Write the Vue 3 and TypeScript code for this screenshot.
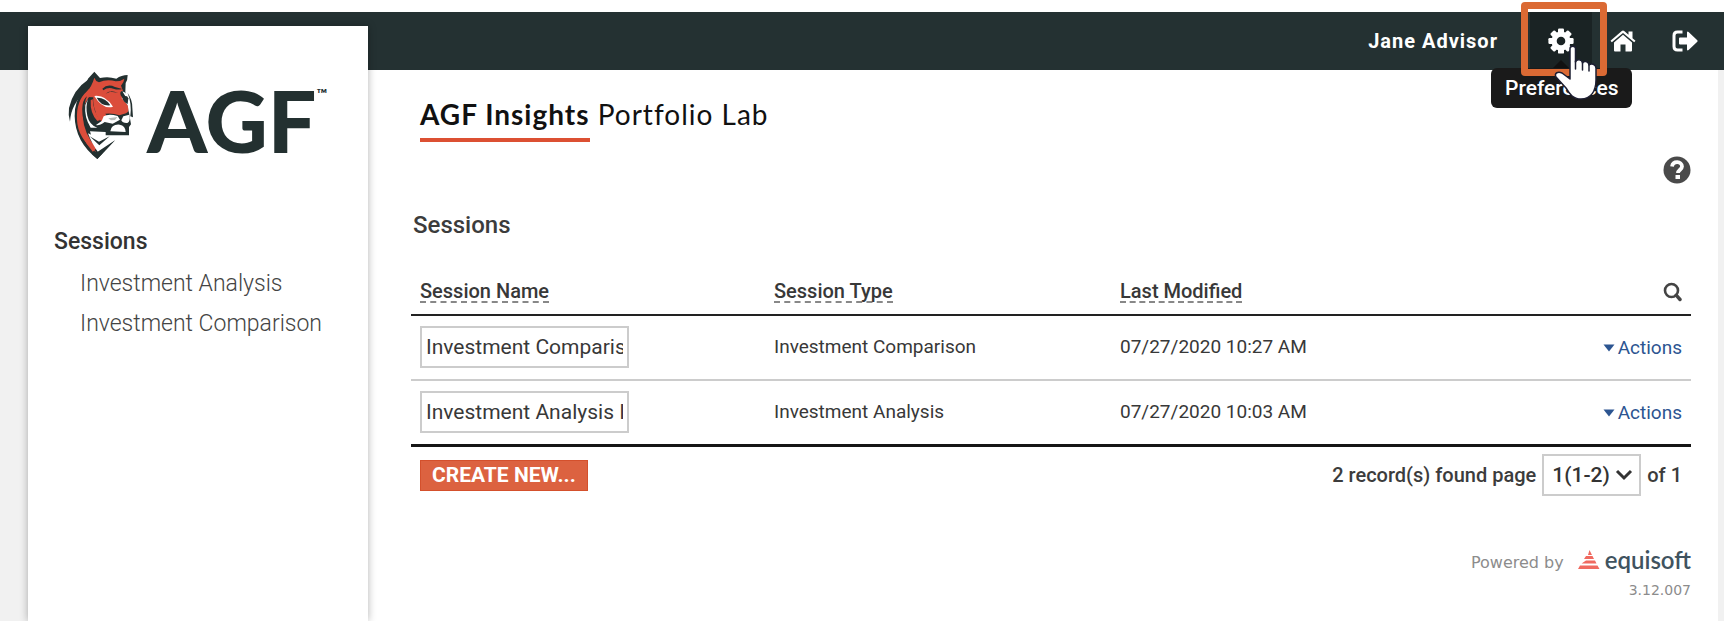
<script setup lang="ts">
import { ref } from 'vue'

interface Session {
  id: number
  name: string
  type: string
  modified: string
}

const user = 'Jane Advisor'
const version = '3.12.007'
const page = ref('1')
const menu = ['Investment Analysis', 'Investment Comparison']
const columns = ['Session Name', 'Session Type', 'Last Modified']
const sessions = ref<Session[]>([
  { id: 1, name: 'Investment Comparison 1', type: 'Investment Comparison', modified: '07/27/2020 10:27 AM' },
  { id: 2, name: 'Investment Analysis I', type: 'Investment Analysis', modified: '07/27/2020 10:03 AM' },
])
</script>

<template>
  <div class="page">
    <header class="topbar">
      <span class="user">{{ user }}</span>
      <nav class="tools" aria-label="Account">
        <a href="#preferences" class="tool active" aria-label="Preferences">
          <svg width="26" height="26" viewBox="0 0 26 26">
            <g fill="#fff">
              <circle cx="13" cy="13" r="9.6" />
              <rect v-for="a in 4" :key="a" x="10" y="0.4" width="6" height="25.2" rx="1.2" :transform="`rotate(${a * 45} 13 13)`" />
            </g>
            <circle cx="13" cy="13" r="4.3" fill="#1a2324" />
          </svg>
          <span class="tooltip" role="tooltip">Preferences</span>
          <span class="highlight"></span>
          <svg class="hand" width="46" height="58" viewBox="0 0 46 58">
            <path d="M16 4.500C16 1.500 21.500 1.500 21.500 4.500V18C22.500 15 28 15 28.500 19C30 16.500 34.500 17 35 21C37 19 42 20 42 24V36C42 47 37 55 27 55C19 55 15.500 50 12 44L2 33C0 29 4 27 8 29L16 35Z" fill="#fff" stroke="#1d1f33" stroke-width="1.500" stroke-linejoin="round" />
            <path d="M21.500 17V25M28.500 19V26M35 21V27" fill="none" stroke="#1d1f33" stroke-width="1.500" stroke-linecap="round" />
          </svg>
        </a>
        <a href="#home" class="tool" aria-label="Home">
          <svg width="26" height="22" viewBox="0 0 26 22" fill="#fff">
            <path d="M13 4.800L22 12.500V20.500Q22 21.500 21 21.500H15.500V14.500H10.500V21.500H5Q4 21.500 4 20.500V12.500Z" />
            <path d="M0.500 10.800L11.800 1Q13 0 14.200 1L18.500 4.700V1.500H22.500V8.200L25.500 10.800L24.200 12.300L13 2.900L1.800 12.300Z" />
          </svg>
        </a>
        <a href="#logout" class="tool" aria-label="Log out">
          <svg width="26" height="22" viewBox="0 0 26 22">
            <path d="M10.500 2H5.500Q2 2 2 5.500V16.500Q2 20 5.500 20H10.500" fill="none" stroke="#fff" stroke-width="3" />
            <path d="M8 7.500H15V2.200Q15.500 1 16.600 1.900L25.300 10.300Q26 11 25.300 11.700L16.600 20.100Q15.500 21 15 19.800V14.500H8Q7 14.500 7 13.500V8.500Q7 7.500 8 7.500Z" fill="#fff" />
          </svg>
        </a>
      </nav>
    </header>

    <aside class="sidebar">
      <div class="brand">
        <svg class="tiger" width="66" height="90" viewBox="24 22 198 270" aria-hidden="true">
          <path d="M86 47Q39 78 27 133Q24 153 30 174Q33 120 79 83Z" fill="#233030" />
          <path d="M103 24L120 43Q145 37 169 45Q184 34 203 34Q203 49 197 58L196 84L213 182L207 190V215H137V205L90 203Q100 244 115 264L165 230L112 286Q45 234 44 157Q43 112 72 75L84 45Z" fill="#233030" />
          <path d="M103 42Q106 52 117 56Q140 46 167 53Q183 53 193 45Q192 56 183 66L189 81Q178 82 182 95L203 125Q211 143 198 149L178 155Q160 148 136 150Q148 164 125 173Q108 161 106 142Q98 123 100 101L80 100L60 160Q62 215 110 267Q53 224 51 168Q48 112 81 83Q95 69 103 42Z" fill="#db4d3b" />
          <path d="M92 82Q58 118 61 160Q64 214 104 259" fill="none" stroke="#db4d3b" stroke-width="15" />
          <path d="M81 98Q70 120 76 154Q82 184 100 194H79Q62 151 68 122Q71 106 81 98Z" fill="#233030" />
          <path d="M84 106Q76 130 82 156Q88 184 112 192L92 192Q72 160 76 124Z" fill="#fff" />
          <path d="M90 112L99 118Q98 145 118 168L126 184L112 185Q86 165 90 112Z" fill="#233030" />
          <path d="M98 106Q100 145 121 169L112 172Q90 150 92 110Z" fill="#db4d3b" />
          <path d="M103 97Q136 93 159 129Q127 138 103 97Z" fill="#fff" />
          <path d="M110 102Q137 101 151 125Q123 128 110 102Z" fill="#233030" />
          <path d="M127 75Q143 59 165 70L187 76Q175 80 160 75Q144 70 130 80Z M137 90Q150 76 174 88L163 86L151 84Z" fill="#233030" />
          <path d="M187 83Q204 87 211 115Q215 137 207 147Q206 136 203 124L184 102Q191 106 197 99Z" fill="#fff" />
          <path d="M187 103Q200 91 205 104L203 121Q191 117 187 103Z" fill="#233030" />
          <path d="M203 88Q217 108 217 132L219 161L211 158Q216 120 203 88Z" fill="#233030" />
          <path d="M131 158Q145 149 173 157L180 168L158 180L134 175Q116 188 108 184L125 172Z" fill="#fff" />
          <path d="M145 164L172 160L165 169L153 170Z" fill="#b6bab8" />
          <path d="M151 203Q154 181 179 183Q196 185 197 205Z" fill="#fff" />
          <path d="M190 158L208 153Q212 173 202 178Q188 179 184 170Z" fill="#fff" />
          <path d="M84 209L109 220L135 211V219L165 230L116 268Q95 240 84 209Z" fill="#fff" />
          <path d="M89 218L117 234L149 218L118 245Z M165 230L112 286L96 271L113 264Z" fill="#233030" />
        </svg>
        <span class="wordmark">AGF</span><span class="tm">™</span>
      </div>
      <nav class="menu" aria-label="Sections">
        <a href="#sessions" class="menu-title">Sessions</a>
        <a v-for="item in menu" :key="item" href="#sessions" class="menu-item">{{ item }}</a>
      </nav>
    </aside>

    <main class="content">
      <h1 class="title"><strong>AGF Insights</strong> Portfolio Lab</h1>
      <div class="help-row">
        <button type="button" class="icon-button" aria-label="Help">
          <svg width="28" height="28" viewBox="0 0 28 28">
            <circle cx="14" cy="14" r="13.500" fill="#4a4a4a" />
            <path d="M9 10.500C10 4.500 19 5 19 10.500C19 13.500 15 14 15 17" fill="none" stroke="#fff" stroke-width="3.800" />
            <rect x="12.500" y="19" width="4.500" height="4" fill="#fff" />
          </svg>
        </button>
      </div>
      <h2 class="heading">Sessions</h2>

      <table class="sessions">
        <thead>
          <tr>
            <th v-for="c in columns" :key="c" scope="col"><a href="#sort" class="sort">{{ c }}</a></th>
            <th scope="col" class="end">
              <button type="button" class="icon-button search" aria-label="Search">
                <svg width="20" height="20" viewBox="0 0 20 20" fill="none" stroke="#444">
                  <circle cx="9.500" cy="8.500" r="6.500" stroke-width="2.600" />
                  <path d="M14.200 13.200L18 17.500" stroke-width="3.400" stroke-linecap="round" />
                </svg>
              </button>
            </th>
          </tr>
        </thead>
        <tbody>
          <tr v-for="s in sessions" :key="s.id">
            <td><input v-model="s.name" class="name" type="text" aria-label="Session name" /></td>
            <td>{{ s.type }}</td>
            <td>{{ s.modified }}</td>
            <td class="end">
              <button type="button" class="actions">
                <svg width="12" height="8" viewBox="0 0 12 8"><path d="M0.500 0.500H11.500L6 7.500Z" fill="#2c5591" /></svg>Actions
              </button>
            </td>
          </tr>
        </tbody>
      </table>

      <div class="table-foot">
        <button type="button" class="create">CREATE NEW...</button>
        <div class="pager">
          <label for="page">2 record(s) found page</label>
          <span class="select">
            <select id="page" v-model="page"><option value="1">1(1-2)</option></select>
            <svg class="chevron" width="18" height="12" viewBox="0 0 18 12"><path d="M2 2L9 9L16 2" fill="none" stroke="#333" stroke-width="3" /></svg>
          </span>
          <span>of 1</span>
        </div>
      </div>

      <footer class="powered">
        <div class="powered-row">
          <span>Powered by</span>
          <svg width="22" height="20" viewBox="0 0 22 20" fill="#f0695f">
            <path d="M11.500 0L14 5H10ZM8 6H14.500L16 9H6ZM8 10.500H17L18.500 13.500H3.500ZM2 15.500H19.500L21.500 19H0Z" />
          </svg>
          <span class="equisoft">equisoft</span>
        </div>
        <div class="version">{{ version }}</div>
      </footer>
    </main>
  </div>
</template>

<style>
body {
  margin: 0;
}
</style>

<style scoped>
.page {
  display: grid;
  grid-template-columns: 28px 340px minmax(0, 1fr) 6px;
  grid-template-rows: 58px 1fr;
  box-sizing: border-box;
  min-height: 100vh;
  padding-top: 12px;
  background: linear-gradient(#fff 12px, #f1f1f1 12px);
  font-family: Roboto, "Liberation Sans", sans-serif;
  font-size: 19px;
  color: #3c3c3c;
}

a {
  color: inherit;
  text-decoration: none;
}

button {
  padding: 0;
  border: 0;
  background: none;
  font: inherit;
  cursor: pointer;
}

svg {
  display: block;
  flex: none;
}

.topbar {
  grid-area: 1 / 1 / 2 / -1;
  display: flex;
  justify-content: flex-end;
  align-items: stretch;
  gap: 32px;
  padding-right: 8px;
  background: #243132;
}

.user {
  align-self: center;
  color: #fff;
  font-size: 20px;
  font-weight: 700;
  letter-spacing: 1px;
}

.tools {
  position: relative;
  z-index: 2;
  display: flex;
}

.tool {
  position: relative;
  display: flex;
  align-items: center;
  justify-content: center;
  width: 62px;
}

.active {
  background: #1a2324;
}

.tooltip {
  position: absolute;
  top: 56px;
  left: -39px;
  padding: 0 14px;
  border-radius: 6px;
  background: #1a1a1a;
  color: #fff;
  font-size: 21px;
  font-weight: 500;
  line-height: 40px;
}

.tooltip::before {
  content: "";
  position: absolute;
  bottom: 100%;
  left: 62px;
  border: 8px solid transparent;
  border-top-width: 0;
  border-bottom-color: #111;
}

.highlight {
  position: absolute;
  top: -10px;
  left: -9px;
  width: 72px;
  height: 60px;
  border: 7px solid #db6a34;
  border-radius: 4px;
}

.hand {
  position: absolute;
  top: 32px;
  left: 24px;
}

.sidebar {
  grid-area: 1 / 2 / 3 / 3;
  z-index: 1;
  margin-top: 14px;
  background: #fff;
  box-shadow: 0 0 8px rgba(0, 0, 0, 0.3);
}

.brand {
  display: flex;
  align-items: flex-start;
  height: 90px;
  padding: 45px 0 0 40px;
}

.wordmark {
  margin-left: 13px;
  color: #233030;
  font: 900 86px/98px Lato, sans-serif;
}

.tm {
  color: #233030;
  font: 700 14px/20px Lato, sans-serif;
  padding-top: 13px;
}

.menu {
  display: flex;
  flex-direction: column;
  padding: 59px 26px 0;
  line-height: 40px;
  font-size: 23px;
}

.menu-title {
  color: #333;
  font-weight: 500;
  line-height: 44px;
}

.menu-item {
  padding-left: 26px;
  color: #444;
  font-weight: 300;
}

.content {
  grid-area: 2 / 3 / 3 / 4;
  padding: 24px 27px 0 43px;
  background: #fff;
}

.title {
  margin: 0 0 0 9px;
  color: #111;
  font: 400 28px/40px Lato, sans-serif;
  letter-spacing: 1px;
}

.title strong {
  display: inline-block;
  padding-bottom: 4px;
  border-bottom: 4px solid #dc5033;
  font-weight: 700;
}

.help-row {
  display: flex;
  justify-content: flex-end;
  margin-top: 14px;
}

.heading {
  margin: 27px 0 25px 2px;
  font-size: 24px;
  font-weight: 500;
  line-height: 28px;
}

.sessions {
  width: 100%;
  border-collapse: collapse;
  table-layout: fixed;
  border-bottom: 3px solid #161616;
  text-align: left;
  color: #383838;
}

th {
  height: 47px;
  padding: 3px 9px 0;
  border-bottom: 2px solid #222;
  font-size: 20px;
  font-weight: 500;
}

th:nth-child(1) {
  width: 336px;
}

th:nth-child(2) {
  width: 328px;
}

th:nth-child(3) {
  width: 328px;
}

td {
  height: 61px;
  padding: 0 9px 2px;
  border-top: 2px solid #ccc;
  font-size: 19px;
}

.sort {
  display: inline-block;
  border-bottom: 2px dashed #888;
  line-height: 20px;
}

.end {
  text-align: right;
}

.search {
  display: inline-block;
  vertical-align: middle;
}

.name {
  display: block;
  box-sizing: border-box;
  width: 209px;
  height: 42px;
  padding: 0 4px;
  border: 2px solid #ccc;
  background: #fff;
  color: #383838;
  font: inherit;
  font-size: 21px;
}

.actions {
  display: inline-flex;
  align-items: center;
  gap: 3px;
  color: #2c5591;
}

.table-foot {
  display: flex;
  justify-content: space-between;
  align-items: center;
  padding: 7px 9px 0;
}

.create {
  height: 31px;
  padding: 0 11px;
  border: 1px solid #d4502c;
  background: #dc6240;
  color: #fff;
  font-size: 21px;
  font-weight: 700;
  line-height: 28px;
}

.pager {
  display: flex;
  align-items: center;
  gap: 6px;
  font-size: 20px;
  font-weight: 500;
}

.select {
  position: relative;
}

.select select {
  appearance: none;
  display: block;
  width: 99px;
  height: 42px;
  padding: 0 8px;
  border: 2px solid #ccc;
  border-radius: 0;
  background: #fff;
  color: #333;
  font: inherit;
  font-size: 21px;
}

.chevron {
  position: absolute;
  top: 15px;
  right: 8px;
}

.powered {
  display: flex;
  flex-direction: column;
  align-items: flex-end;
  padding-top: 48px;
  color: #8c8c8c;
  font-family: "DejaVu Sans", sans-serif;
}

.powered-row {
  display: flex;
  align-items: center;
  font-size: 16px;
  line-height: 38px;
}

.powered-row svg {
  margin: 0 5px 6px 14px;
}

.equisoft {
  padding-bottom: 7px;
  color: #40535f;
  font: 600 24px/28px Lato, sans-serif;
}

.version {
  font-size: 14px;
  line-height: 16px;
}
</style>
